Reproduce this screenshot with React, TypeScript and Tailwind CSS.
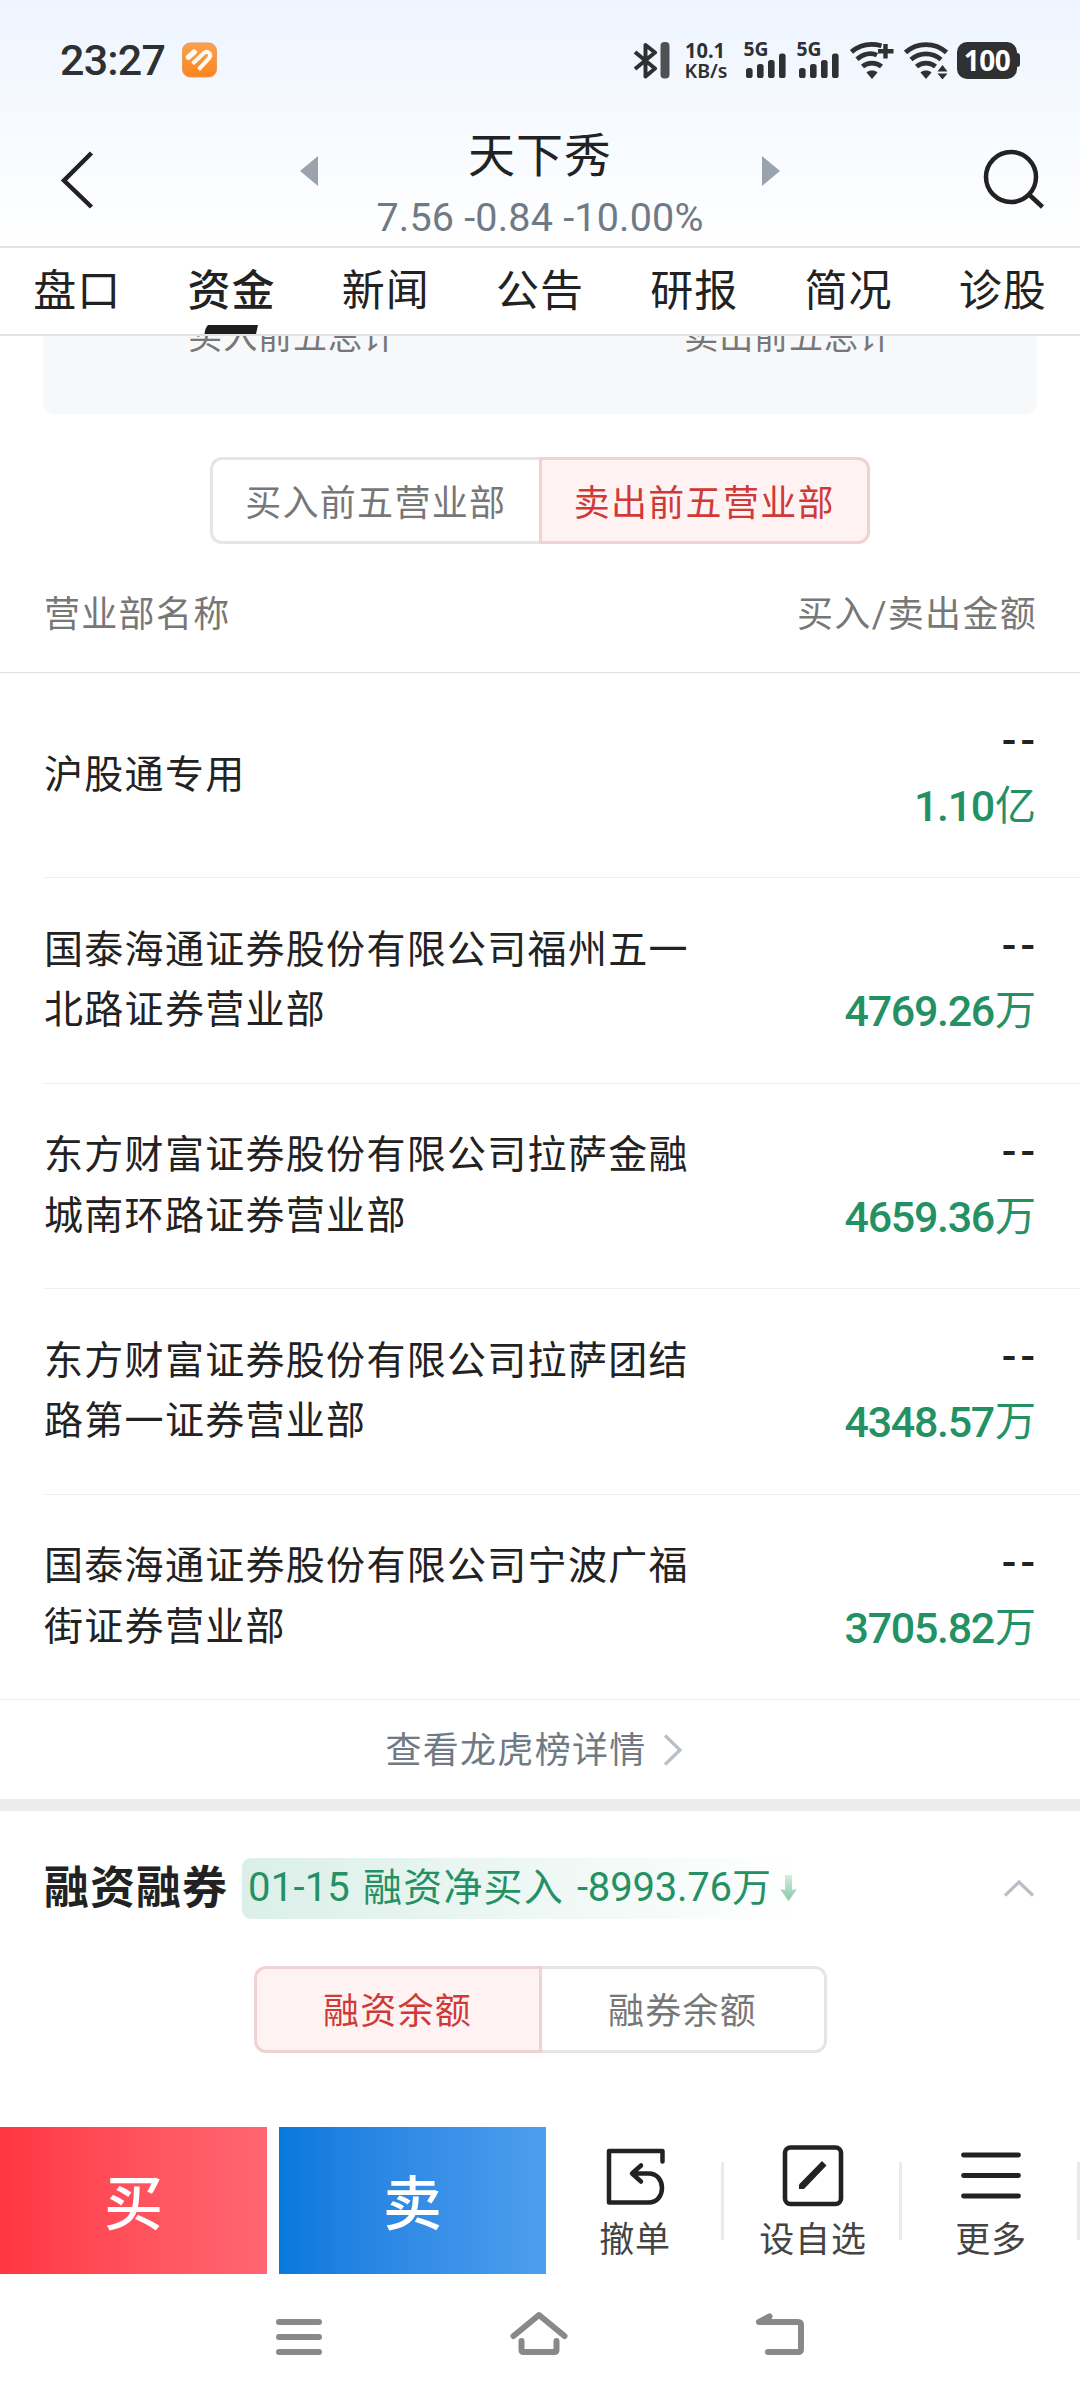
import React from 'react';

const TABS = ['盘口', '资金', '新闻', '公告', '研报', '简况', '诊股'];

const BRANCHES = [
  { lines: ['沪股通专用'], value: '1.10', unit: '亿' },
  { lines: ['国泰海通证券股份有限公司福州五一', '北路证券营业部'], value: '4769.26', unit: '万' },
  { lines: ['东方财富证券股份有限公司拉萨金融', '城南环路证券营业部'], value: '4659.36', unit: '万' },
  { lines: ['东方财富证券股份有限公司拉萨团结', '路第一证券营业部'], value: '4348.57', unit: '万' },
  { lines: ['国泰海通证券股份有限公司宁波广福', '街证券营业部'], value: '3705.82', unit: '万' },
];

function Signal() {
  return (
    <svg className="h-[36px] w-[43px] overflow-visible font-['Noto_Sans']" viewBox="0 0 43 36" fill="#2f3031">
      <text x="-0.5" y="13.5" fontSize="19" fontWeight="700" textLength="25" lengthAdjust="spacingAndGlyphs">5G</text>
      <rect x="2" y="26" width="6.6" height="10" rx="2.6" />
      <rect x="13" y="22" width="6.6" height="14" rx="2.6" />
      <rect x="24" y="18" width="6.6" height="18" rx="2.6" />
      <rect x="35" y="11.5" width="6.6" height="24.5" rx="2.6" />
    </svg>
  );
}

function Wifi({ variant }: { variant: 'plus' | 'arrows' }) {
  return (
    <svg className="h-[37px] w-[44px]" viewBox="0 0 44 37" fill="none" stroke="#2f3031" strokeWidth="4.800">
      {variant === 'plus' ? (
        <>
          <path d="M1.500 10C9 3.500 20 .8 31.500 3.800" />
          <path d="M7 17.200c6-5.500 14-7 20-4" />
          <path d="M35.500 2v14.500M28 9.200h15.500" strokeWidth="4.400" />
        </>
      ) : (
        <>
          <path d="M1.500 10.500C13 0 31 0 42.500 10.500" />
          <path d="M7 17.500c9-7.500 21-7.500 30 0" />
        </>
      )}
      <path d="M12.500 24.500c5.500-4.500 13.500-4.500 19 0" />
      <path d="M16.500 30.500c3-2.600 8-2.600 11 0L22 37z" fill="#2f3031" stroke="none" />
      {variant === 'arrows' && (
        <path d="M33.500 29.500l5-6.500 5 6.500zM33.500 31.500l5 6 5-6z" fill="#2f3031" stroke="none" />
      )}
    </svg>
  );
}

function StatusBar() {
  return (
    <div className="flex h-[120px] items-center pl-[60px] pr-[60px] text-[#2f3031]">
      <span className="text-[43px] font-medium leading-none tracking-[-0.8px]">23:27</span>
      <svg className="ml-[17px] h-[36px] w-[35px]" viewBox="0 0 36 36">
        <defs>
          <linearGradient id="app" x1="0" y1="0" x2="0" y2="1">
            <stop offset="0" stopColor="#fba24c" />
            <stop offset="1" stopColor="#fd831c" />
          </linearGradient>
        </defs>
        <rect x=".5" y=".5" width="35" height="35" rx="8" fill="url(#app)" stroke="#e59a56" strokeWidth="1" />
        <g fill="none" stroke="#fffaf2" strokeWidth="4.200">
          <path d="M6.600 15.200L12.500 9.800" strokeWidth="5.600" strokeLinecap="round" />
          <path d="M10.800 21.800L22.200 11c4.500-3.500 8.500 1 5.800 4.800L17 27.800" />
        </g>
      </svg>
      <div className="ml-auto flex items-center">
        <svg className="h-[37px] w-[37px]" viewBox="0 0 37 37" fill="none" stroke="#2f3031">
          <path d="M2 10l20 16.500-9.500 8V3l9.500 7.500L2 27" strokeWidth="4" strokeLinejoin="round" />
          <rect x="27.500" y="0" width="9" height="36.500" rx="4" fill="#505153" stroke="none" />
        </svg>
        <svg className="ml-[15px] h-[37px] w-[44px] overflow-visible font-['Noto_Sans']" viewBox="0 0 44 37" fill="#2f3031">
          <text x="0" y="16" fontSize="22" fontWeight="700" textLength="40" lengthAdjust="spacingAndGlyphs">10.1</text>
          <text x="-0.500" y="35.500" fontSize="19.500" fontWeight="600" textLength="43" lengthAdjust="spacingAndGlyphs">KB/s</text>
        </svg>
        <div className="ml-[15px]"><Signal /></div>
        <div className="ml-[10px]"><Signal /></div>
        <div className="ml-[10px]"><Wifi variant="plus" /></div>
        <div className="ml-[10px]"><Wifi variant="arrows" /></div>
        <div className="ml-[9px] flex items-center">
          <div className="flex h-[37px] w-[60px] items-center justify-center rounded-[10px] bg-[#2f3031] font-['Noto_Sans'] text-[28px] font-bold leading-none tracking-[-0.500px] text-white">
            100
          </div>
          <div className="h-[14px] w-[3px] rounded-r-[3px] bg-[#2f3031]" />
        </div>
      </div>
    </div>
  );
}

function StockHeader() {
  return (
    <div className="flex h-[126px] items-start pl-[60px] pr-[35px]">
      <svg className="mt-[30.500px] h-[58px] w-[34px]" viewBox="0 0 34 58" fill="none" stroke="#222" strokeWidth="4.500">
        <path d="M31.500 2L4 29.500 31.500 56" />
      </svg>
      <div className="ml-[206px] flex items-start">
        <svg className="mt-[36px] h-[30px] w-[18px]" viewBox="0 0 18 30" fill="#9aa3ad"><path d="M0 15L18 0v30z" /></svg>
        <div className="flex w-[444px] flex-col items-center">
          <div className="mt-[9px] text-[47px] leading-[54px] tracking-[1px] text-[#222]">天下秀</div>
          <div className="mt-[10px] whitespace-pre text-[39.500px] leading-[50px] tracking-[0.200px] text-[#6f7a85]">7.56 -0.84 -10.00%</div>
        </div>
        <svg className="mt-[36px] h-[30px] w-[18px]" viewBox="0 0 18 30" fill="#9aa3ad"><path d="M18 15L0 0v30z" /></svg>
      </div>
      <svg className="ml-auto mt-[29px] h-[60px] w-[62px]" viewBox="0 0 62 60" fill="none" stroke="#222" strokeWidth="4.500">
        <circle cx="28" cy="28" r="25" />
        <path d="M46 45.500L59.500 58" />
      </svg>
    </div>
  );
}

function Tabs() {
  return (
    <nav className="relative grid h-[90px] grid-cols-7 border-y-2 border-[#e2e2e2] bg-white text-[#222]">
      {TABS.map((t) => (
        <div key={t} className={t === '资金' ? 'flex justify-center font-medium' : 'flex justify-center'}>
          <span className="mt-[13px] text-[43px] leading-[60px] tracking-[1px]">{t}</span>
        </div>
      ))}
      <svg className="absolute bottom-0 left-[204px] h-[9px] w-[54px]" viewBox="0 0 54 9" fill="#1d1d1d">
        <path d="M4 0H54L52 9H.5Q1 3 4 0z" />
      </svg>
    </nav>
  );
}

function Segmented({ items, active, width }: { items: string[]; active: number; width: string }) {
  return (
    <div className={`mx-auto flex h-[87px] ${width}`}>
      {items.map((label, i) => {
        const side = i === 0 ? 'rounded-l-[12px]' : 'rounded-r-[12px]';
        const edge = i === active ? '' : i === 0 ? 'border-r-0' : 'border-l-0';
        const tone =
          i === active
            ? 'border-[#f1d2d2] bg-[#fef3f2] text-[#cf3a39]'
            : 'border-[#e5e5e5] bg-white text-[#777]';
        return (
          <div
            key={label}
            className={`flex flex-1 items-center justify-center border-[3px] pt-[6px] text-[36px] leading-[52px] tracking-[1.300px] ${side} ${edge} ${tone}`}
          >
            {label}
          </div>
        );
      })}
    </div>
  );
}

function BranchRow({ row, last }: { row: (typeof BRANCHES)[number]; last: boolean }) {
  return (
    <div className={last ? 'border-b border-[#f0f0f0] pl-[43px]' : 'pl-[43px]'}>
      <div
        className={`flex items-center justify-between pr-[44px] ${last ? 'h-[204.5px]' : 'h-[205.5px] border-b border-[#f0f0f0]'}`}
      >
        <div className="pl-px text-[39px] leading-[60.500px] tracking-[1.300px] text-[#222]">
          {row.lines.map((l) => (
            <div key={l}>{l}</div>
          ))}
        </div>
        <div className="flex flex-col items-end">
          <div className="-mr-[3px] -mt-[4px] h-[66px] text-[43px] font-medium leading-[66px] tracking-[4px] text-[#222]">--</div>
          <div className="flex h-[66px] items-center text-[#249165]">
            <span className="text-[43px] font-medium leading-[66px] tracking-[-1.300px]">{row.value}</span>
            <span className="pl-px text-[41px] leading-[66px]">{row.unit}</span>
          </div>
        </div>
      </div>
    </div>
  );
}

function Tool({ label, children }: { label: string; children: React.ReactNode }) {
  return (
    <div className="relative flex flex-1 flex-col items-center">
      <div className="mt-[17px] flex h-[64px] items-center">{children}</div>
      <span className="mt-[8px] text-[35px] leading-[50px] tracking-[0.800px] text-[#444]">{label}</span>
      <div className="absolute right-0 top-[35px] h-[78px] w-[3px] bg-[#e9eaec]" />
    </div>
  );
}

export default function App() {
  return (
    <div className="flex h-[2400px] w-[1080px] flex-col overflow-hidden bg-white font-['Roboto','Noto_Sans_CJK_SC',sans-serif]" lang="zh-CN">
      <header className="bg-linear-to-b from-[#eef5ff] to-white">
        <StatusBar />
        <StockHeader />
      </header>
      <Tabs />

      <section className="mx-[43px] h-[78px] overflow-hidden rounded-b-[12px] bg-[#f7f8fa]">
        <div className="-mt-[24px] grid grid-cols-2 pl-[2px] text-center text-[34px] leading-[50px] tracking-[0.900px] text-[#777]">
          <span>买入前五总计</span>
          <span>卖出前五总计</span>
        </div>
      </section>

      <div className="mt-[43px]">
        <Segmented items={['买入前五营业部', '卖出前五营业部']} active={1} width="w-[660px]" />
      </div>

      <div className="flex h-[128.500px] items-center justify-between border-b border-[#e0e0e0] pl-[44px] pr-[43px] pt-[15px] text-[36px] leading-[52px] tracking-[1.300px] text-[#777]">
        <span>营业部名称</span>
        <span>买入/卖出金额</span>
      </div>

      <div>
        {BRANCHES.map((row, i) => (
          <BranchRow key={row.value} row={row} last={i === BRANCHES.length - 1} />
        ))}
      </div>

      <div className="flex h-[99px] items-center justify-center pl-px pt-[3px] text-[36px] leading-[52px] tracking-[1.300px] text-[#6f7a85]">
        <span>查看龙虎榜详情</span>
        <svg className="mb-[3px] ml-[16px] mr-[13px] h-[32px] w-[20px]" viewBox="0 0 20 32" fill="none" stroke="#b9bfc7" strokeWidth="3.200">
          <path d="M2 1.500L17 16 2 30.500" />
        </svg>
      </div>
      <div className="h-[12px] bg-[#ebecee]" />

      <div className="mt-[46.500px] flex h-[61px] items-center pl-[44px] pr-[45px]">
        <h2 className="text-[45px] font-bold leading-[61px] tracking-[1px] text-[#222]">融资融券</h2>
        <div className="ml-[14px] flex h-[61px] items-center rounded-[9px] bg-linear-to-r from-[#dbefe8] to-white pl-[6px] text-[#249165]">
          <span className="text-[40px] leading-[58px] tracking-[0.200px]">01-15</span>
          <span className="ml-[13px] text-[39px] leading-[58px] tracking-[1.200px]">融资净买入</span>
          <span className="ml-[13px] text-[40px] leading-[58px] tracking-[-0.200px]">-8993.76</span>
          <span className="text-[39px] leading-[58px]">万</span>
          <svg className="ml-[9px] h-[26px] w-[17px]" viewBox="0 0 17 26">
            <defs>
              <linearGradient id="fall" x1="0" y1="0" x2="0" y2="1">
                <stop offset="0" stopColor="#d3ecdf" />
                <stop offset="1" stopColor="#86c9a9" />
              </linearGradient>
            </defs>
            <path d="M5 0h7v15l5-1-8.500 12L0 14l5 1z" fill="url(#fall)" />
          </svg>
        </div>
        <svg className="ml-auto h-[18px] w-[32px]" viewBox="0 0 32 18" fill="none" stroke="#b9bfc7" strokeWidth="3.200">
          <path d="M2 16.500L16 3l14 13.500" />
        </svg>
      </div>

      <div className="mt-[47px]">
        <Segmented items={['融资余额', '融券余额']} active={0} width="w-[573px]" />
      </div>

      <footer className="mt-auto">
        <div className="flex h-[147px]">
          <button className="w-[267px] bg-linear-to-r from-[#ff3543] to-[#ff6672] pt-[7px] text-[59px] font-medium leading-none text-white">买</button>
          <button className="ml-[12px] w-[267px] bg-linear-to-r from-[#0678dd] to-[#4e9eed] pt-[7px] text-[59px] font-medium leading-none text-white">卖</button>
          <div className="flex flex-1">
            <Tool label="撤单">
              <svg className="h-[60px] w-[60px]" viewBox="0 0 60 60" fill="none" stroke="#222" strokeWidth="4.500" strokeLinecap="round" strokeLinejoin="round">
                <path d="M57.500 15.500V5H4v51.500h39.500c18 0 18-29 0-29H27.500M36 19.500L27 27.500 36 35.500" />
              </svg>
            </Tool>
            <Tool label="设自选">
              <svg className="h-[62px] w-[62px]" viewBox="0 0 62 62" fill="none" stroke="#222">
                <rect x="3" y="2.500" width="56" height="56.500" rx="5.500" strokeWidth="4.600" />
                <path d="M17 39.500L40 16 44.500 20.500 22 44H17z" fill="#222" stroke="none" />
              </svg>
            </Tool>
            <Tool label="更多">
              <svg className="h-[60px] w-[60px]" viewBox="0 0 60 60" stroke="#222" strokeWidth="4.800" strokeLinecap="round">
                <path d="M2.500 9h55M2.500 29.500h55M2.500 50h55" />
              </svg>
            </Tool>
          </div>
        </div>
        <div className="flex h-[126px] items-start justify-center pl-px pt-[36px]">
          <svg className="mt-[9px] h-[36px] w-[46px]" viewBox="0 0 46 36" stroke="#898989" strokeWidth="6" strokeLinecap="round">
            <path d="M3 3h40M3 18h40M3 33h40" />
          </svg>
          <svg className="ml-[187px] h-[47px] w-[60px]" viewBox="0 0 60 47" fill="none" stroke="#898989" strokeWidth="6" strokeLinecap="round" strokeLinejoin="round">
            <path d="M4.500 26L30 5l25.500 21M12.500 31v9q0 2 2 2h31q2 0 2-2V31" />
          </svg>
          <svg className="ml-[186px] h-[47px] w-[50px]" viewBox="0 0 50 47" fill="none" stroke="#898989" strokeWidth="6" strokeLinecap="round" strokeLinejoin="round">
            <path d="M14.500 6.500L4 12h39q3 0 3 3v24q0 3-3 3H13" />
          </svg>
        </div>
      </footer>
    </div>
  );
}
